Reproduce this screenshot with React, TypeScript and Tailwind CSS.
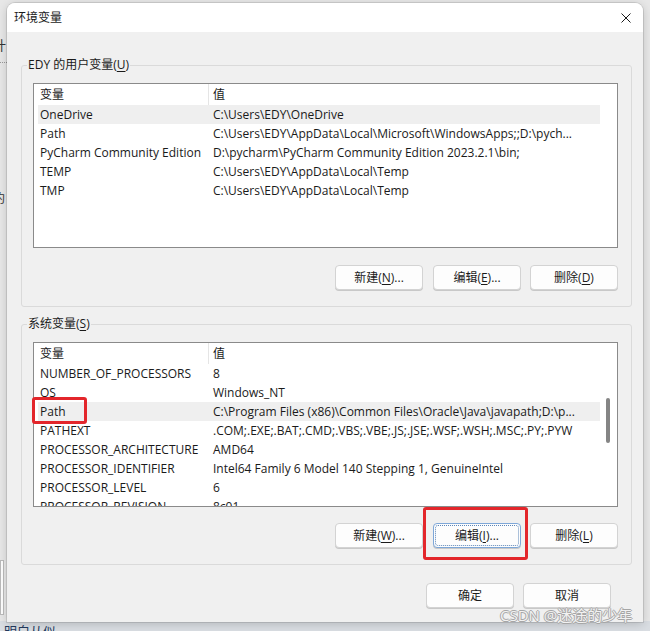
import React from 'react';

type Row = [string, string];

const userVars: Row[] = [
  ['OneDrive', 'C:\\Users\\EDY\\OneDrive'],
  ['Path', 'C:\\Users\\EDY\\AppData\\Local\\Microsoft\\WindowsApps;;D:\\pych...'],
  ['PyCharm Community Edition', 'D:\\pycharm\\PyCharm Community Edition 2023.2.1\\bin;'],
  ['TEMP', 'C:\\Users\\EDY\\AppData\\Local\\Temp'],
  ['TMP', 'C:\\Users\\EDY\\AppData\\Local\\Temp'],
];

const sysVars: Row[] = [
  ['NUMBER_OF_PROCESSORS', '8'],
  ['OS', 'Windows_NT'],
  ['Path', 'C:\\Program Files (x86)\\Common Files\\Oracle\\Java\\javapath;D:\\p...'],
  ['PATHEXT', '.COM;.EXE;.BAT;.CMD;.VBS;.VBE;.JS;.JSE;.WSF;.WSH;.MSC;.PY;.PYW'],
  ['PROCESSOR_ARCHITECTURE', 'AMD64'],
  ['PROCESSOR_IDENTIFIER', 'Intel64 Family 6 Model 140 Stepping 1, GenuineIntel'],
  ['PROCESSOR_LEVEL', '6'],
  ['PROCESSOR_REVISION', '8c01'],
];

const VarList: React.FC<{ rows: Row[]; selected: number; scroll?: boolean }> = ({ rows, selected, scroll }) => (
  <div className="h-[165px] border border-[#8a8a8a] bg-white flex overflow-hidden text-[12px] text-[#1a1a1a]">
    <div className="flex-1 min-w-0 pl-[4px]">
      <div className="flex h-[21px] items-center">
        <div className="w-[170px] pl-[2px]">变量</div>
        <div className="flex-1 h-full flex items-center border-l border-[#e5e5e5] pl-[4px]">值</div>
      </div>
      {rows.map(([k, v], i) => (
        <div key={k + i} className={`flex h-[19px] items-center ${i === selected ? 'bg-[#efefef]' : ''}`}>
          <div className="w-[170px] pl-[2px] whitespace-nowrap overflow-hidden">{k}</div>
          <div className="flex-1 pl-[5px] whitespace-nowrap overflow-hidden">{v}</div>
        </div>
      ))}
    </div>
    <div className="w-[17px] shrink-0 pt-[55px] pl-[6px]">
      {scroll && <div className="w-[4px] h-[45px] rounded-full bg-[#858585]" />}
    </div>
  </div>
);

const Btn: React.FC<{ children: React.ReactNode; focused?: boolean; className?: string }> = ({ children, focused, className }) => (
  <button
    className={`relative w-[88px] h-[25px] rounded-[4px] border bg-[#fdfdfd] text-[12px] text-[#1b1b1b] shadow-[0_1px_0_#c8c8c8] ${
      focused ? 'border-[#7ea7d8]' : 'border-[#d3d3d3]'
    } ${className ?? ''}`}
  >
    {focused && <span className="absolute inset-[1px] rounded-[3px] border border-dotted border-[#5d86b8]" />}
    {children}
  </button>
);

const Acc: React.FC<{ k: string }> = ({ k }) => <span className="underline underline-offset-2">{k}</span>;

const Group: React.FC<{ label: React.ReactNode; className?: string; children: React.ReactNode }> = ({ label, className, children }) => (
  <fieldset className={`border border-[#dadada] rounded-[3px] ${className ?? ''}`}>
    <legend className="ml-[5px] px-[1px] text-[12px] leading-[16px] text-[#1a1a1a]">{label}</legend>
    <div className="pt-[10px] pl-[11px] pr-[13px] pb-[16px]">{children}</div>
  </fieldset>
);

export default function App() {
  return (
    <div className="relative w-[650px] h-[631px] overflow-hidden bg-[#e7e7e7] font-['Open_Sans','Noto_Sans_CJK_SC',sans-serif]">
      {/* bits of the windows behind */}
      <div className="absolute left-[-7px] top-[36px] text-[13px] text-[#333]">计</div>
      <div className="absolute left-0 top-[62px] w-[7px] border-t border-dotted border-[#999]" />
      <div className="absolute left-[-7px] top-[190px] text-[12px] text-[#333]">约</div>
      <div className="absolute left-0 top-[560px] w-[4px] h-[55px] bg-white border border-[#bbb]" />
      <div className="absolute left-0 top-[621px] w-full h-[10px] bg-[#d9dde2]" />
      <div className="absolute left-[4px] top-[622px] text-[13px] text-[#233a5e]">明白从似</div>

      <div className="relative ml-[7px] mt-[3px] w-[636px] h-[619px] flex flex-col rounded-t-[8px] overflow-hidden bg-[#f0f0f0] shadow-[0_0_0_1px_rgba(0,0,0,0.1),0_2px_10px_rgba(0,0,0,0.18)]">
        <div className="h-[29px] bg-white flex items-center justify-between pl-[7px] pr-[12px]">
          <span className="text-[12px] text-[#1a1a1a]">环境变量</span>
          <svg width="10" height="10" viewBox="0 0 10 10">
            <path d="M0.5 0.5 L9.5 9.5 M9.5 0.5 L0.5 9.5" stroke="#1a1a1a" strokeWidth="1" />
          </svg>
        </div>

        <div className="flex-1 flex flex-col pt-[25px] pl-[14px] pr-[11px]">
          <Group label={<>EDY 的用户变量(<Acc k="U" />)</>}>
            <VarList rows={userVars} selected={0} />
            <div className="mt-[17px] flex justify-end gap-[9px]">
              <Btn className="mr-[1px]">新建(<Acc k="N" />)...</Btn>
              <Btn>编辑(<Acc k="E" />)...</Btn>
              <Btn>删除(<Acc k="D" />)</Btn>
            </div>
          </Group>

          <Group className="mt-[9px]" label={<>系统变量(<Acc k="S" />)</>}>
            <VarList rows={sysVars} selected={2} scroll />
            <div className="mt-[16px] flex justify-end gap-[9px]">
              <Btn className="mr-[1px]">新建(<Acc k="W" />)...</Btn>
              <Btn focused>编辑(<Acc k="I" />)...</Btn>
              <Btn>删除(<Acc k="L" />)</Btn>
            </div>
          </Group>

          <div className="mt-[18px] pr-[21px] flex justify-end gap-[9px]">
            <Btn>确定</Btn>
            <Btn>取消</Btn>
          </div>
        </div>
      </div>

      {/* annotation boxes */}
      <div className="absolute left-[32px] top-[397px] w-[55px] h-[27px] border-[3px] border-[#e3262b] rounded-[3px]" />
      <div className="absolute left-[423px] top-[507px] w-[105px] h-[53px] border-[3px] border-[#e3262b] rounded-[3px]" />

      <div className="absolute left-[500px] top-[604px] text-[15px] text-[#f2f2f2] [text-shadow:-1px_0_#a6a6a6,1px_0_#a6a6a6,0_-1px_#a6a6a6,0_1px_#a6a6a6] whitespace-nowrap">
        CSDN @迷途的少年
      </div>
    </div>
  );
}
